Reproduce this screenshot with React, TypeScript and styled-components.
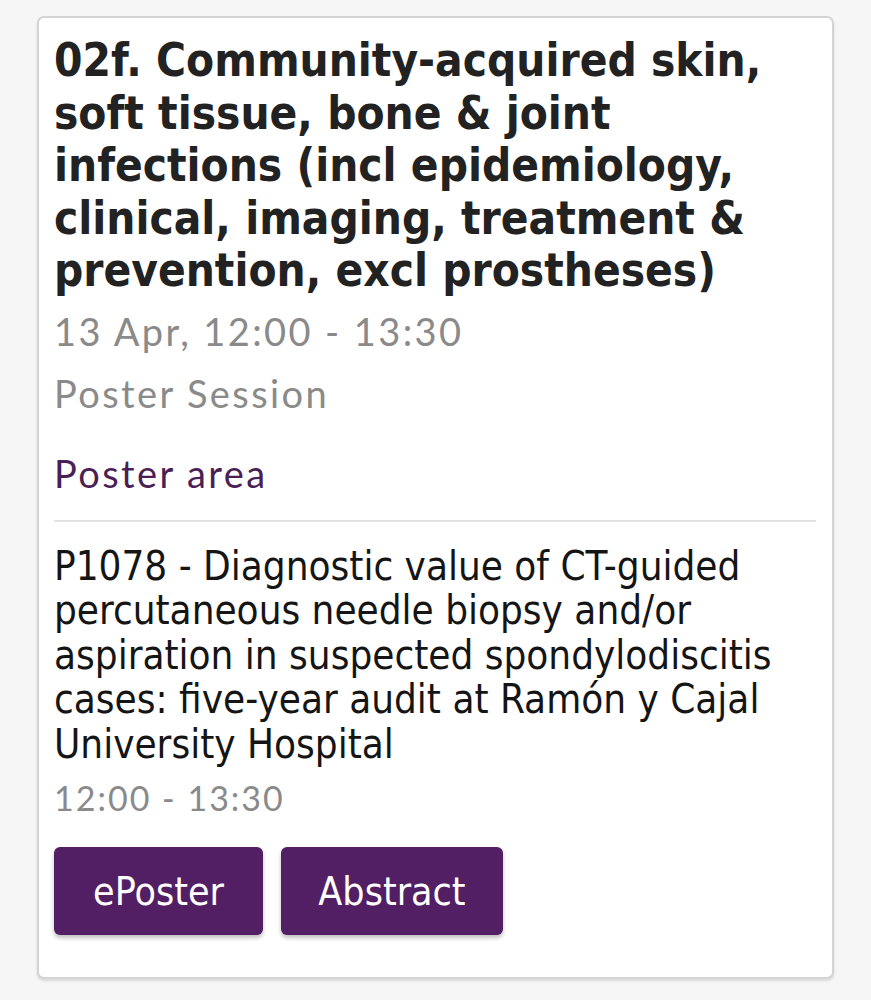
import React from 'react'
import styled, { createGlobalStyle } from 'styled-components'

const GlobalStyle = createGlobalStyle`
  body {
    margin: 0;
    background: #f6f6f6;
    font-family: "DejaVu Sans Condensed", Roboto, sans-serif;
  }
`

const Page = styled.div`
  padding: 16px 37px 20px 37px;
`

const Card = styled.div`
  background: #fff;
  border: 2px solid #d4d4d4;
  border-radius: 7px;
  box-shadow: 0 2px 3px rgba(0, 0, 0, 0.12);
  padding: 17px 16px 42px 15px;
  display: flex;
  flex-direction: column;
`

const Title = styled.h1`
  margin: 0;
  font-family: "DejaVu Sans Condensed", Roboto, sans-serif;
  font-weight: 700;
  font-size: 45.5px;
  line-height: 52.5px;
  color: #222;
`

const Meta = styled.div<{ $purple?: boolean; $gap?: number }>`
  font-family: Lato, "Open Sans", sans-serif;
  font-size: 38px;
  line-height: 44px;
  letter-spacing: 2.4px;
  color: ${p => (p.$purple ? '#4b1f55' : '#8a8a8a')};
  margin-top: ${p => p.$gap ?? 0}px;
`

const Time = styled.div`
  font-family: Lato, "Open Sans", sans-serif;
  font-size: 34px;
  line-height: 40px;
  letter-spacing: 2px;
  color: #8a8a8a;
  margin-top: 12px;
`

const Divider = styled.hr`
  border: 0;
  border-top: 2px solid #e2e2e2;
  margin: 25px 0 22px 0;
`

const PaperTitle = styled.div`
  font-family: "DejaVu Sans Condensed", Roboto, sans-serif;
  font-size: 40px;
  line-height: 44.5px;
  color: #151515;
`

const Actions = styled.div`
  display: flex;
  gap: 18px;
  margin-top: 29px;
`

const Button = styled.button<{ $w: number }>`
  width: ${p => p.$w}px;
  height: 88px;
  border: 0;
  border-radius: 6px;
  background: #521f64;
  color: #fff;
  font-family: "DejaVu Sans Condensed", Roboto, sans-serif;
  font-size: 39px;
  box-shadow: 0 3px 4px rgba(0, 0, 0, 0.25);
`

export default function App() {
  return (
    <Page>
      <GlobalStyle />
      <Card>
        <Title>
          02f. Community-acquired skin, soft tissue, bone &amp; joint infections (incl epidemiology,
          clinical, imaging, treatment &amp; prevention, excl prostheses)
        </Title>
        <Meta $gap={11}>13 Apr, 12:00 - 13:30</Meta>
        <Meta $gap={18}>Poster Session</Meta>
        <Meta $gap={36} $purple>Poster area</Meta>
        <Divider />
        <PaperTitle>
          P1078 - Diagnostic value of CT-guided percutaneous needle biopsy and/or aspiration in
          suspected spondylodiscitis cases: five-year audit at Ramón y Cajal University Hospital
        </PaperTitle>
        <Time>12:00 - 13:30</Time>
        <Actions>
          <Button $w={209}>ePoster</Button>
          <Button $w={222}>Abstract</Button>
        </Actions>
      </Card>
    </Page>
  )
}
